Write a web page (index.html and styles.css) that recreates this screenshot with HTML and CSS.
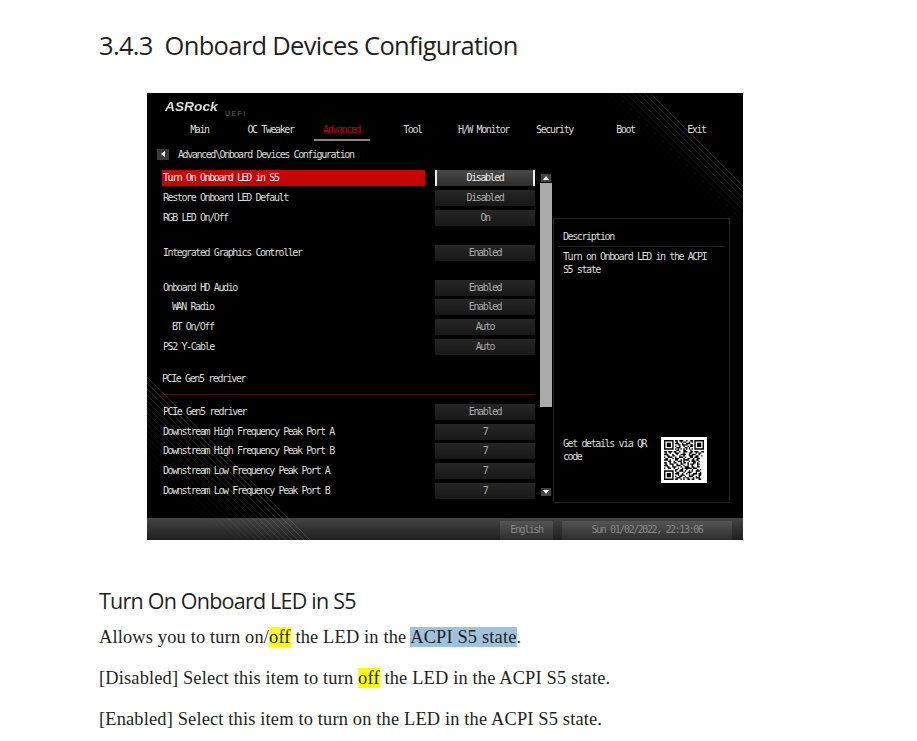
FILE: index.html
```html
<!doctype html>
<html lang="en">
<head>
    <meta charset="utf-8">
    <title>Onboard Devices Configuration</title>
    <link rel="stylesheet" href="styles.css">
</head>
<body>
<main class="page">
    <h1>3.4.3&nbsp; Onboard Devices Configuration</h1>

    <div class="bios">
        <div class="hatch hatch-top"></div>

        <div class="brand">
            <span class="logo">ASRock</span>
            <span class="uefi">UEFI</span>
        </div>

        <nav class="nav">
            <span>Main</span>
            <span>OC Tweaker</span>
            <span class="current">Advanced</span>
            <span>Tool</span>
            <span>H/W Monitor</span>
            <span>Security</span>
            <span>Boot</span>
            <span>Exit</span>
        </nav>

        <div class="crumb">
            <span class="back"><svg width="6" height="6" viewBox="0 0 6 6"><path d="M5 0v6L1 3z" fill="#fff"/></svg></span>
            <span>Advanced\Onboard Devices Configuration</span>
        </div>

        <div class="content">
            <div class="settings">
                <div class="row selected"><span class="label">Turn On Onboard LED in S5</span><span class="value">Disabled</span></div>
                <div class="row"><span class="label">Restore Onboard LED Default</span><span class="value">Disabled</span></div>
                <div class="row"><span class="label">RGB LED On/Off</span><span class="value">On</span></div>
                <div class="row spaced"><span class="label">Integrated Graphics Controller</span><span class="value">Enabled</span></div>
                <div class="row spaced"><span class="label">Onboard HD Audio</span><span class="value">Enabled</span></div>
                <div class="row"><span class="label sub">WAN Radio</span><span class="value">Enabled</span></div>
                <div class="row"><span class="label sub">BT On/Off</span><span class="value">Auto</span></div>
                <div class="row"><span class="label">PS2 Y-Cable</span><span class="value">Auto</span></div>
                <div class="section">PCIe Gen5 redriver</div>
                <div class="row"><span class="label">PCIe Gen5 redriver</span><span class="value">Enabled</span></div>
                <div class="row"><span class="label">Downstream High Frequency Peak Port A</span><span class="value">7</span></div>
                <div class="row"><span class="label">Downstream High Frequency Peak Port B</span><span class="value">7</span></div>
                <div class="row"><span class="label">Downstream Low Frequency Peak Port A</span><span class="value">7</span></div>
                <div class="row"><span class="label">Downstream Low Frequency Peak Port B</span><span class="value">7</span></div>
            </div>

            <div class="scroll">
                <span class="arrow"><svg width="6" height="4" viewBox="0 0 6 4"><path d="M3 0l3 4H0z" fill="#fff"/></svg></span>
                <span class="thumb"></span>
                <span class="arrow"><svg width="6" height="4" viewBox="0 0 6 4"><path d="M0 0h6L3 4z" fill="#fff"/></svg></span>
            </div>

            <aside class="desc">
                <div class="desc-title">Description</div>
                <p class="desc-text">Turn on Onboard LED in the ACPI S5 state</p>
                <div class="qr-block">
                    <p class="qr-text">Get details via QR code</p>
                    <div class="qr">
                        <svg width="40" height="40" viewBox="0 0 29 29">
                            <path fill-rule="evenodd" d="M0 0h7v7H0zM1 1v5h5V1zM2 2h3v3H2zM22 0h7v7h-7zM23 1v5h5V1zM24 2h3v3h-3zM0 22h7v7H0zM1 23v5h5v-5zM2 24h3v3H2z"/>
                            <path fill="none" stroke="#000" d="M8 .5h2m1 0h3m2 0h1m2 0h2
                                M9 1.5h1m2 0h1m1 0h2m2 0h1m1 0h1
                                M8 2.5h3m2 0h1m2 0h3
                                M10 3.5h2m1 0h4m2 0h2
                                M8 4.5h1m2 0h1m2 0h1m2 0h1m1 0h2
                                M9 5.5h3m3 0h2m1 0h1
                                M8 6.5h1m1 0h1m1 0h1m1 0h1m1 0h1m1 0h1m1 0h1
                                M9 7.5h2m3 0h2m3 0h1
                                M0 8.5h2m1 0h3m1 0h2m2 0h1m2 0h3m2 0h2m1 0h3m2 0h2
                                M1 9.5h1m2 0h1m3 0h3m3 0h1m3 0h2m3 0h1m1 0h2
                                M0 10.5h3m3 0h1m2 0h1m2 0h4m2 0h1m1 0h3m2 0h1
                                M2 11.5h2m2 0h2m3 0h1m2 0h1m3 0h3m2 0h2m2 0h1
                                M0 12.5h1m2 0h3m2 0h1m2 0h3m1 0h1m3 0h2m1 0h3
                                M1 13.5h2m3 0h1m1 0h3m3 0h1m2 0h2m2 0h1m2 0h2
                                M0 14.5h3m1 0h1m3 0h2m2 0h1m1 0h4m2 0h2m1 0h2
                                M3 15.5h2m2 0h1m2 0h3m1 0h1m3 0h1m1 0h3m2 0h1
                                M0 16.5h2m2 0h1m2 0h2m3 0h1m1 0h2m1 0h1m3 0h2m1 0h1
                                M1 17.5h1m2 0h3m2 0h1m2 0h2m3 0h1m1 0h3m2 0h2
                                M0 18.5h3m3 0h1m2 0h3m2 0h1m2 0h1m2 0h1m3 0h1
                                M2 19.5h2m2 0h3m3 0h1m2 0h3m2 0h2m2 0h2
                                M0 20.5h1m2 0h2m2 0h1m2 0h1m2 0h1m1 0h5m1 0h3
                                M8 21.5h2m2 0h2m2 0h1m3 0h1m3 0h1m1 0h1
                                M8 22.5h1m2 0h3m1 0h1m2 0h1m1 0h1m2 0h3
                                M9 23.5h2m3 0h1m2 0h3m3 0h1m2 0h1
                                M8 24.5h3m2 0h1m2 0h1m1 0h1m2 0h3m1 0h2
                                M10 25.5h1m1 0h3m3 0h1m1 0h2m3 0h2
                                M8 26.5h1m2 0h2m2 0h1m2 0h3m2 0h1m1 0h1
                                M9 27.5h3m2 0h1m1 0h2m3 0h1m1 0h3
                                M8 28.5h2m2 0h1m1 0h1m2 0h2m1 0h2m3 0h2"/>
                        </svg>
                    </div>
                </div>
            </aside>
        </div>

        <footer class="bar">
            <span class="bar-btn lang">English</span>
            <span class="bar-btn clock">Sun 01/02/2022, 22:13:06</span>
        </footer>

        <div class="hatch hatch-bottom"></div>
    </div>

    <h2>Turn On Onboard LED in S5</h2>
    <p class="text">Allows you to turn on/<span class="hl-yellow">off</span> the LED in the <span class="hl-blue">ACPI S5 state</span>.</p>
    <p class="text">[Disabled] Select this item to turn <span class="hl-yellow">off</span> the LED in the ACPI S5 state.</p>
    <p class="text">[Enabled] Select this item to turn on the LED in the ACPI S5 state.</p>
</main>
</body>
</html>
```

FILE: styles.css
```css
html, body {
    margin: 0;
    height: 741px;
    overflow: hidden;
    background-color: white;
}
.page {
    padding-left: 99px;
    color: #231f20;
}
h1 {
    margin: 0;
    padding-top: 28px;
    height: 93px;
    box-sizing: border-box;
    font-family: "Open Sans", sans-serif;
    font-weight: 400;
    font-size: 25.5px;
    line-height: 35px;
    letter-spacing: -0.69px;
}
h2 {
    margin: 48px 0 0;
    font-family: "Open Sans", sans-serif;
    font-weight: 400;
    font-size: 21.5px;
    line-height: 26px;
    letter-spacing: -0.78px;
}
.text {
    margin: 0 0 19px;
    font-family: "Liberation Serif", serif;
    font-size: 18.4px;
    line-height: 22px;
    letter-spacing: 0.16px;
}
.text:first-of-type {
    margin-top: 12px;
}
.hl-yellow {
    background-color: #ffff00;
}
.hl-blue {
    background-color: #9fc3dc;
}

/* bios picture */
.bios {
    position: relative;
    display: flex;
    flex-direction: column;
    width: 596px;
    height: 447px;
    margin-left: 48px;
    overflow: hidden;
    background-color: #000;
    color: #ddd;
    font-family: "DejaVu Sans Mono", monospace;
    font-size: 10px;
    letter-spacing: -1.4px;
}
.hatch {
    position: absolute;
    background-image: repeating-linear-gradient(45deg, rgba(255, 255, 255, 0.14) 0, rgba(255, 255, 255, 0.14) 1px, transparent 1px, transparent 4.25px);
}
.hatch-top {
    top: 0;
    right: 0;
    width: 143px;
    height: 143px;
    clip-path: polygon(0 0, 55px 0, 100% 88px, 100% 100%);
    mask-image: linear-gradient(225deg, #000 31%, transparent 50%);
}
.hatch-bottom {
    left: 0;
    bottom: 0;
    width: 165px;
    height: 165px;
    clip-path: polygon(0 0, 100% 100%, 73px 100%, 0 92px);
    mask-image: linear-gradient(225deg, #000 50%, transparent 78%);
}
.brand {
    position: relative;
    display: flex;
    align-items: flex-start;
    height: 29px;
    box-sizing: border-box;
    padding: 6px 0 0 18px;
    font-family: "Liberation Sans", sans-serif;
}
.logo {
    font-size: 12.5px;
    line-height: 16px;
    font-weight: bold;
    font-style: italic;
    letter-spacing: 0;
    color: #dcdcdc;
    transform: scaleX(1.1);
    transform-origin: left;
}
.uefi {
    margin: 10px 0 0 12px;
    font-size: 7px;
    line-height: 9px;
    letter-spacing: 1.4px;
    color: #666;
}
.nav {
    position: relative;
    display: grid;
    grid-template-columns: repeat(8, 71px);
    padding-left: 17px;
    height: 18px;
    line-height: 16px;
    text-align: center;
}
.nav span {
    justify-self: center;
}
.nav .current {
    width: 56px;
    height: 17px;
    border-bottom: 2px solid #888;
    color: #c00000;
}
.crumb {
    position: relative;
    display: flex;
    align-items: center;
    gap: 9px;
    height: 14px;
    margin-top: 7px;
    margin-bottom: 2px;
    padding-left: 10px;
}
.back {
    display: flex;
    align-items: center;
    justify-content: center;
    width: 12px;
    height: 11px;
    background-color: #3a3a3a;
}
.content {
    position: relative;
    display: flex;
    margin-top: 7px;
    padding-left: 15px;
}
.settings {
    width: 373px;
}
.row {
    display: grid;
    grid-template-columns: 263px 100px;
    column-gap: 10px;
    height: 16px;
    margin-bottom: 3.75px;
    line-height: 15px;
}
.row.spaced {
    margin-top: 19px;
}
.label {
    padding-left: 1px;
}
.label.sub {
    padding-left: 10px;
}
.value {
    background: linear-gradient(#262626, #181818);
    color: #aaa;
    text-align: center;
}
.selected .label {
    background-color: #c80505;
    color: #fff;
}
.selected .value {
    background: linear-gradient(#4a4a4a, #2c2c2c);
    border-left: 2px solid #eee;
    border-right: 2px solid #eee;
    color: #eee;
}
.section {
    height: 28px;
    margin: 12px 0 9px;
    padding-top: 4px;
    box-sizing: border-box;
    border-bottom: 1px solid #4d1414;
    line-height: 16px;
}
.scroll {
    display: flex;
    flex-direction: column;
    align-items: center;
    width: 12px;
    margin: 4px 0 0 5px;
}
.arrow {
    display: flex;
    align-items: center;
    justify-content: center;
    width: 10px;
    height: 8px;
    background-color: #444;
}
.thumb {
    width: 12px;
    height: 224px;
    margin: 1px 0 81px;
    background-color: #aaa;
}
.desc {
    display: flex;
    flex-direction: column;
    width: 177px;
    height: 285px;
    box-sizing: border-box;
    margin: 48px 0 0 1px;
    padding: 11px 4px 0;
    border: 1px solid #242424;
    line-height: 13px;
}
.desc-title {
    padding: 0 0 3px 5px;
    border-bottom: 1px solid #242424;
}
.desc-text {
    width: 150px;
    margin: 3px 0 0;
    padding-left: 5px;
}
.qr-block {
    display: flex;
    justify-content: space-between;
    margin-top: auto;
    padding: 0 18px 19px 5px;
}
.qr-text {
    width: 90px;
    margin: 0;
}
.qr {
    display: flex;
    align-items: center;
    justify-content: center;
    width: 46px;
    height: 46px;
    background-color: #fff;
}
.bar {
    position: absolute;
    left: 0;
    right: 0;
    bottom: 0;
    display: flex;
    gap: 9px;
    height: 22px;
    padding: 3px 11px 0 353px;
    box-sizing: border-box;
    background: linear-gradient(#444, #2a2a2a 70%, #1f1f1f);
    color: #888;
    line-height: 15px;
}
.bar-btn {
    height: 19px;
    padding-top: 1px;
    box-sizing: border-box;
    text-align: center;
    background: linear-gradient(#555, #2c2c2c);
}
.lang {
    width: 53px;
}
.clock {
    width: 170px;
}
```
